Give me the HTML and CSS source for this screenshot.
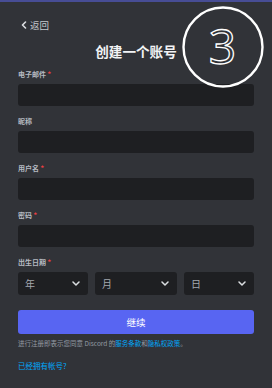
FILE: index.html
```html
<!DOCTYPE html>
<html lang="zh-CN">
<head>
<meta charset="utf-8">
<title>创建一个账号</title>
<link rel="stylesheet" href="styles.css">
</head>
<body>
<div class="topbar"></div>
<main class="page">
  <a class="back" href="#">
    <svg class="back-icon" width="6" height="8" viewBox="0 0 6 8"><polyline points="4.5,1 1.5,4 4.5,7" fill="none" stroke="#dbdee1" stroke-width="1.6" stroke-linecap="round" stroke-linejoin="round"/></svg>
    <span>返回</span>
  </a>
  <h1 class="title">创建一个账号</h1>
  <form class="form">
    <div class="field">
      <label class="label">电子邮件 <span class="req">*</span></label>
      <div class="input"></div>
    </div>
    <div class="field">
      <label class="label">昵称</label>
      <div class="input"></div>
    </div>
    <div class="field">
      <label class="label">用户名 <span class="req">*</span></label>
      <div class="input"></div>
    </div>
    <div class="field">
      <label class="label">密码 <span class="req">*</span></label>
      <div class="input"></div>
    </div>
    <div class="field">
      <label class="label">出生日期 <span class="req">*</span></label>
      <div class="dob">
        <div class="select"><span>年</span><svg width="8" height="5" viewBox="0 0 8 5"><polyline points="1,1 4,4 7,1" fill="none" stroke="#dbdee1" stroke-width="1.5" stroke-linecap="round" stroke-linejoin="round"/></svg></div>
        <div class="select"><span>月</span><svg width="8" height="5" viewBox="0 0 8 5"><polyline points="1,1 4,4 7,1" fill="none" stroke="#dbdee1" stroke-width="1.5" stroke-linecap="round" stroke-linejoin="round"/></svg></div>
        <div class="select"><span>日</span><svg width="8" height="5" viewBox="0 0 8 5"><polyline points="1,1 4,4 7,1" fill="none" stroke="#dbdee1" stroke-width="1.5" stroke-linecap="round" stroke-linejoin="round"/></svg></div>
      </div>
    </div>
    <button class="submit" type="button">继续</button>
    <p class="terms">进行注册即表示您同意 Discord 的<a href="#">服务条款</a>和<a href="#">隐私权政策</a>。</p>
    <a class="login" href="#">已经拥有帐号?</a>
  </form>
</main>
<svg class="badge" width="82" height="82" viewBox="0 0 82 82">
  <circle cx="41" cy="41" r="39.5" fill="none" stroke="#ffffff" stroke-width="2.4"/>
  <text x="40.5" y="58" text-anchor="middle" class="badge-num">3</text>
</svg>
</body>
</html>
```

FILE: styles.css
```css
html, body {
  margin: 0;
  padding: 0;
}
body {
  width: 272px;
  height: 388px;
  background: #313338;
  font-family: "Noto Sans CJK SC", "Noto Sans", sans-serif;
  overflow: hidden;
  position: relative;
}
.topbar {
  height: 2px;
  background: #474d95;
}
.page {
  padding: 0 18px;
  display: flex;
  flex-direction: column;
}
.back {
  margin-top: 17px;
  display: flex;
  align-items: center;
  gap: 3px;
  color: #c4c9ce;
  text-decoration: none;
  font-size: 9.5px;
  line-height: 12px;
  padding-left: 3px;
}
.title {
  margin: 11px 0 0;
  text-align: center;
  color: #f2f3f5;
  font-size: 13.6px;
  line-height: 18px;
  font-weight: 700;
}
.form {
  margin-top: 9px;
  display: flex;
  flex-direction: column;
}
.field {
  display: flex;
  flex-direction: column;
  gap: 5px;
  margin-bottom: 10px;
}
.label {
  font-size: 7px;
  line-height: 10px;
  font-weight: 700;
  color: #b5bac1;
}
.req {
  color: #f23f42;
}
.input {
  height: 22px;
  background: #1e1f22;
  border-radius: 3px;
}
.dob {
  display: grid;
  grid-template-columns: 70fr 82fr 70fr;
  gap: 7px;
}
.select {
  height: 23px;
  background: #1e1f22;
  border-radius: 3px;
  display: flex;
  align-items: center;
  justify-content: space-between;
  padding: 0 8px 0 7px;
  color: #a3a8af;
  font-size: 10px;
}
.submit {
  margin-top: 5px;
  height: 24px;
  border: 0;
  border-radius: 3px;
  background: #5865f2;
  color: #ffffff;
  font-family: inherit;
  font-size: 9.5px;
  padding: 0;
}
.terms {
  margin: 5px 0 0;
  font-size: 6.5px;
  line-height: 9px;
  color: #949ba4;
  white-space: nowrap;
}
.terms a {
  color: #00a8fc;
  text-decoration: none;
}
.login {
  margin-top: 13px;
  font-size: 7.5px;
  line-height: 10px;
  color: #00a8fc;
  text-decoration: none;
}
.badge {
  position: absolute;
  left: 182px;
  top: 6px;
}
.badge-num {
  font-family: "Open Sans", sans-serif;
  font-size: 48px;
  font-weight: 500;
  fill: none;
  stroke: #ffffff;
  stroke-width: 1.3;
}
```
